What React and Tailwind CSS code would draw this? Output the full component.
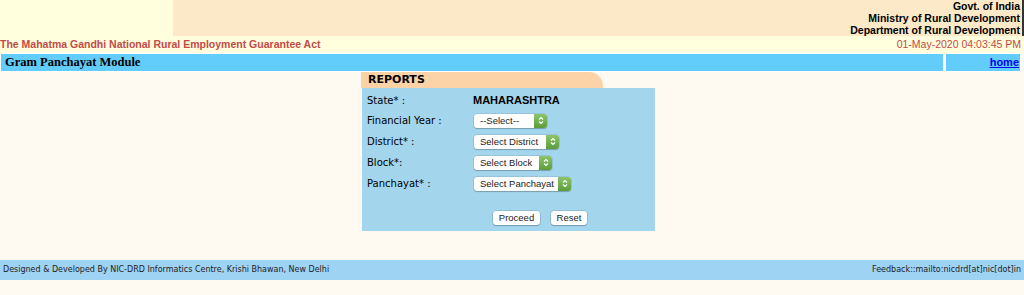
import React from 'react'

const SANS = { fontFamily: '"Liberation Sans", Arial, sans-serif' }
const VERD = { fontFamily: '"DejaVu Sans", Verdana, sans-serif' }

function Stepper() {
  return (
    <span className="flex h-full w-[13px] items-center justify-center rounded-r-[3px] bg-gradient-to-b from-[#8cc46c] to-[#5c9c3a]">
      <svg width="6" height="9" viewBox="0 0 6 9" fill="none" stroke="white" strokeWidth="1.1">
        <path d="M1 3.5 L3 1.5 L5 3.5" />
        <path d="M1 5.5 L3 7.5 L5 5.5" />
      </svg>
    </span>
  )
}

function FakeSelect({ label, width }) {
  return (
    <div
      className="flex h-[14px] items-center justify-between rounded-[3px] bg-white shadow-[0_0_0_0.5px_rgba(0,0,0,0.15),0_1px_1px_rgba(0,0,0,0.2)]"
      style={{ width }}
    >
      <span className="whitespace-nowrap pl-[6px] text-[9.5px] leading-none text-[#222]" style={SANS}>{label}</span>
      <Stepper />
    </div>
  )
}

function Btn({ children, className = '' }) {
  return (
    <button
      className={`flex h-[14px] items-center justify-center rounded-[3px] bg-white text-[9.5px] leading-none text-[#222] shadow-[0_0_0_0.5px_rgba(0,0,0,0.2),0_1px_1px_rgba(0,0,0,0.2)] ${className}`}
      style={SANS}
    >
      {children}
    </button>
  )
}

const ROWS = [
  { label: 'Financial Year :', select: '--Select--', w: 73 },
  { label: 'District* :', select: 'Select District', w: 85 },
  { label: 'Block*:', select: 'Select Block', w: 78 },
  { label: 'Panchayat* :', select: 'Select Panchayat', w: 97 },
]

export default function App() {
  return (
    <div className="h-[295px] w-[1024px] overflow-hidden bg-[#fffaf1]">
      {/* header */}
      <div className="flex h-[36px]">
        <div className="w-[173px] bg-[#fffedd]" />
        <div
          className="flex flex-1 flex-col items-end justify-center pr-[2px] text-[10.5px] font-bold leading-[12px] text-black bg-[#fce9c7] border-r-2 border-[#333]"
          style={SANS}
        >
          <span>Govt. of India</span>
          <span>Ministry of Rural Development</span>
          <span>Department of Rural Development</span>
        </div>
      </div>
      <div className="flex h-[17px] items-center justify-between bg-[#fffedd] pr-[3px] text-[10.5px] text-[#c44a48]" style={SANS}>
        <span className="font-bold">The Mahatma Gandhi National Rural Employment Guarantee Act</span>
        <span>01-May-2020 04:03:45 PM</span>
      </div>
      <div className="flex h-[19px] gap-[3px] bg-white px-[1px] pt-[1px] pb-[1px] pr-[4px]">
        <div className="flex flex-1 items-center bg-[#62cdfb] pl-[4px]">
          <span className="text-[12.5px] font-bold text-black" style={{ fontFamily: '"Liberation Serif", "Times New Roman", serif' }}>
            Gram Panchayat Module
          </span>
        </div>
        <div className="flex w-[74px] items-center justify-end bg-[#62cdfb] pr-[1px]">
          <a href="#" className="text-[11px] font-bold text-[#0000ee] underline" style={SANS}>home</a>
        </div>
      </div>

      {/* reports panel */}
      <div className="ml-[361px] w-[294px]">
        <div className="flex h-[16px] w-[242px] items-center rounded-tr-[14px] bg-[#fbd3a6] pl-[7px] text-[11px] font-bold text-black" style={VERD}>
          REPORTS
        </div>
        <div className="ml-[1px] flex h-[143px] flex-col bg-[#a3d5ec] pl-[5px] pt-[3px] text-[10px] text-black" style={VERD}>
          <div className="flex h-[19px] items-center">
            <span className="w-[106px]">State* :</span>
            <span className="text-[11px] font-bold" style={SANS}>MAHARASHTRA</span>
          </div>
          {ROWS.map(r => (
            <div key={r.label} className="flex h-[21px] items-center">
              <span className="w-[107px]">{r.label}</span>
              <FakeSelect label={r.select} width={r.w} />
            </div>
          ))}
          <div className="mt-[17px] flex gap-[11px] pl-[126px]">
            <Btn className="w-[47px]">Proceed</Btn>
            <Btn className="w-[36px]">Reset</Btn>
          </div>
        </div>
      </div>

      {/* footer */}
      <div className="mt-[29px] flex h-[20px] items-center justify-between bg-[#9ed3f4] px-[3px] text-[8px] text-[#222]" style={VERD}>
        <span>Designed &amp; Developed By NIC-DRD Informatics Centre, Krishi Bhawan, New Delhi</span>
        <span>Feedback::mailto:nicdrd[at]nic[dot]in</span>
      </div>
    </div>
  )
}
